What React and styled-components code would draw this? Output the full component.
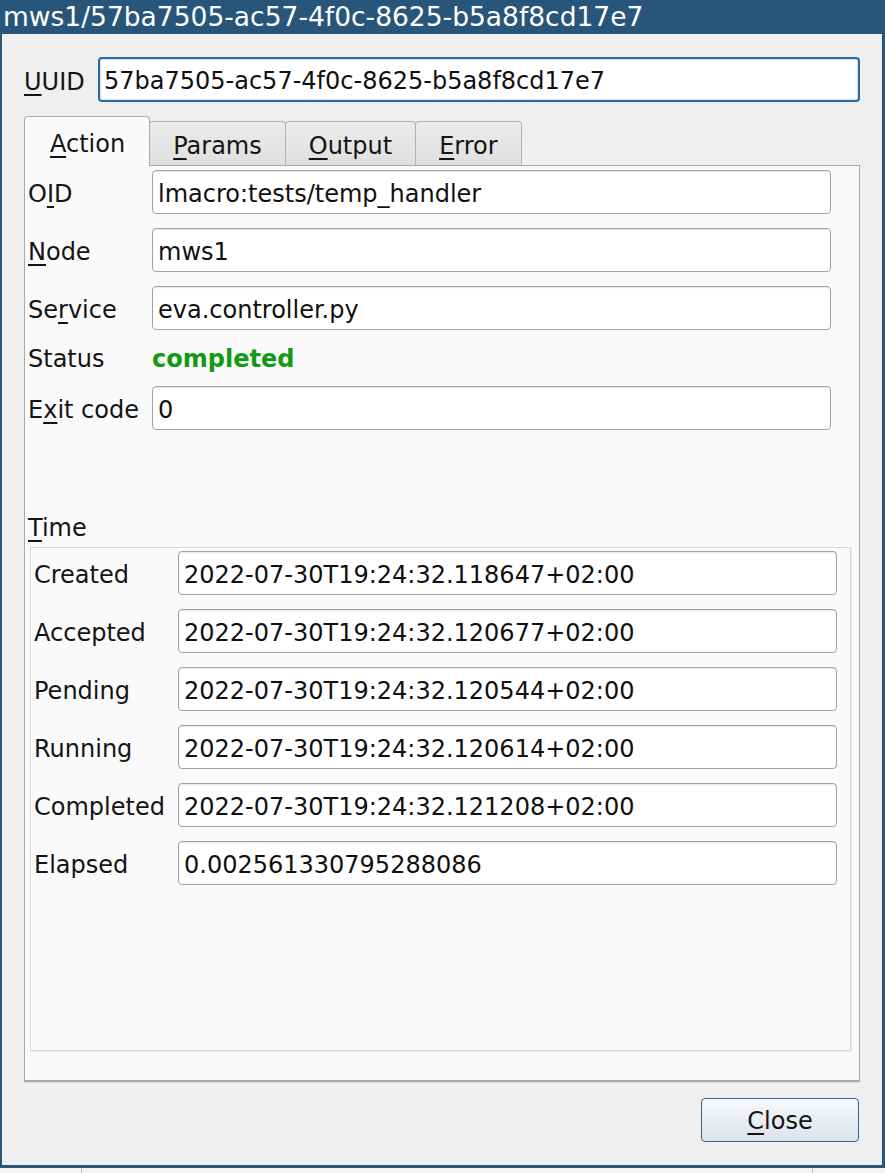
import React from "react";
import styled, { createGlobalStyle, css } from "styled-components";

const GlobalStyle = createGlobalStyle`
  html, body { margin: 0; padding: 0; }
  body {
    background: #f3f4f6;
    font-family: "DejaVu Sans", "Noto Sans", sans-serif;
    color: #101010;
  }
  * { box-sizing: border-box; }
`;

const Window = styled.div`
  width: 885px;
  height: 1168px;
  display: flex;
  flex-direction: column;
  border-left: 2px solid #28567b;
  border-right: 3px solid #28567b;
  border-bottom: 3px solid #28567b;
`;

const TitleBar = styled.div`
  height: 34px;
  flex: none;
  background: #28567b;
  color: #ffffff;
  font-size: 26.5px;
  line-height: 34px;
  padding-left: 1px;
  white-space: nowrap;
  overflow: hidden;
`;

const Body = styled.div`
  flex: 1;
  background: #efefef;
  padding: 23px 22px 23px 22px;
  display: flex;
  flex-direction: column;
`;

const Row = styled.div`
  display: flex;
  align-items: center;
  height: ${(p) => p.$h || 44}px;
  flex: none;
`;

const Label = styled.div`
  width: ${(p) => p.$w}px;
  flex: none;
  font-size: 24px;
  padding-top: ${(p) => (p.$shift ?? 4)}px;
  white-space: nowrap;
  color: #141414;
`;

const Mn = styled.span`
  text-decoration: underline;
  text-decoration-thickness: 2px;
  text-underline-offset: 4px;
`;

const Field = styled.div`
  flex: 1;
  height: 100%;
  background: #ffffff;
  border: 1px solid #a2a2a2;
  border-radius: 4px;
  box-shadow: inset 0 1px 1px rgba(0, 0, 0, 0.09);
  font-size: 24px;
  padding: 4px 0 0 5px;
  display: flex;
  align-items: center;
  white-space: nowrap;
  overflow: hidden;
  color: #101010;
  ${(p) =>
    p.$focused &&
    css`
      border: 2px solid #2c6a9c;
      box-shadow: inset 0 0 0 1px #d3e2ee;
      padding: 3px 0 0 4px;
    `}
`;

const TabBar = styled.div`
  display: flex;
  align-items: flex-start;
  height: 50px;
  margin-top: 14px;
  flex: none;
  position: relative;
  z-index: 1;
`;

const Tab = styled.div`
  height: 44px;
  margin-top: 5px;
  padding: 4px 23px 0;
  font-size: 24px;
  display: flex;
  align-items: center;
  justify-content: center;
  border: 1px solid #b2b2b2;
  border-bottom: none;
  border-radius: 4px 4px 0 0;
  background: linear-gradient(#ececec, #dfdfdf);
  color: #141414;
  margin-left: -1px;
  ${(p) =>
    p.$active &&
    css`
      height: 50px;
      margin-top: 0;
      margin-left: 0;
      background: #fafafa;
      border-color: #aaaaaa;
      padding: 4px 24px 0 25px;
      position: relative;
      z-index: 2;
    `}
`;

const Panel = styled.div`
  height: 916px;
  flex: none;
  margin-top: -1px;
  background: #fafafa;
  border: 1px solid #a9a9a9;
  box-shadow: 0 1px 0 #a9a9a9, 0 2px 0 #dedede;
  display: flex;
  flex-direction: column;
  padding-top: 4px;
`;

const FormSection = styled.div`
  display: flex;
  flex-direction: column;
  gap: 14px;
  padding: 0 28px 0 3px;
`;

const StatusValue = styled.div`
  font-size: 24px;
  font-weight: bold;
  padding-top: 2px;
  color: #129a12;
`;

const GroupTitle = styled.div`
  margin: 83px 0 0 3px;
  height: 28px;
  font-size: 24px;
  padding-top: 2px;
  display: flex;
  align-items: center;
  color: #141414;
`;

const GroupBox = styled.div`
  flex: 1;
  margin: 6px 8px 29px 5px;
  border: 1px solid #d6d6d6;
  box-shadow: inset 1px 1px 0 #ffffff, 1px 1px 0 #e9e9e9;
  padding: 3px 13px 0 3px;
  display: flex;
  flex-direction: column;
  gap: 14px;
`;

const ButtonRow = styled.div`
  display: flex;
  justify-content: flex-end;
  margin-top: 17px;
  padding-right: 1px;
`;

const Button = styled.div`
  width: 158px;
  height: 44px;
  border: 1px solid #2c6a9c;
  border-radius: 4px;
  background: linear-gradient(#f7f9fb, #dbe2e9);
  font-size: 24px;
  padding-top: 2px;
  display: flex;
  align-items: center;
  justify-content: center;
  color: #141414;
`;

const BottomStrip = styled.div`
  height: 5px;
  display: flex;
  align-items: stretch;
`;

const Tick = styled.span`
  width: 1px;
  margin-left: ${(p) => p.$left}px;
  background: #c4c4c4;
`;

const actionRows = [
  { label: <>O<Mn>I</Mn>D</>, value: "lmacro:tests/temp_handler" },
  { label: <><Mn>N</Mn>ode</>, value: "mws1" },
  { label: <>Se<Mn>r</Mn>vice</>, value: "eva.controller.py" },
];

const timeRows = [
  ["Created", "2022-07-30T19:24:32.118647+02:00"],
  ["Accepted", "2022-07-30T19:24:32.120677+02:00"],
  ["Pending", "2022-07-30T19:24:32.120544+02:00"],
  ["Running", "2022-07-30T19:24:32.120614+02:00"],
  ["Completed", "2022-07-30T19:24:32.121208+02:00"],
  ["Elapsed", "0.002561330795288086"],
];

export default function App() {
  return (
    <>
      <GlobalStyle />
      <Window>
        <TitleBar>mws1/57ba7505-ac57-4f0c-8625-b5a8f8cd17e7</TitleBar>
        <Body>
          <Row $h={45}>
            <Label $w={74}>
              <Mn>U</Mn>UID
            </Label>
            <Field $focused>57ba7505-ac57-4f0c-8625-b5a8f8cd17e7</Field>
          </Row>
          <TabBar>
            <Tab $active>
              <span><Mn>A</Mn>ction</span>
            </Tab>
            <Tab>
              <span><Mn>P</Mn>arams</span>
            </Tab>
            <Tab>
              <span><Mn>O</Mn>utput</span>
            </Tab>
            <Tab>
              <span><Mn>E</Mn>rror</span>
            </Tab>
          </TabBar>
          <Panel>
            <FormSection>
              {actionRows.map((r, i) => (
                <Row key={i}>
                  <Label $w={124}>{r.label}</Label>
                  <Field>{r.value}</Field>
                </Row>
              ))}
              <Row $h={28}>
                <Label $w={124} $shift={2}>Status</Label>
                <StatusValue>completed</StatusValue>
              </Row>
              <Row>
                <Label $w={124}>
                  E<Mn>x</Mn>it code
                </Label>
                <Field>0</Field>
              </Row>
            </FormSection>
            <GroupTitle>
              <span><Mn>T</Mn>ime</span>
            </GroupTitle>
            <GroupBox>
              {timeRows.map(([l, v]) => (
                <Row key={l}>
                  <Label $w={144}>{l}</Label>
                  <Field>{v}</Field>
                </Row>
              ))}
            </GroupBox>
          </Panel>
          <ButtonRow>
            <Button>
              <span><Mn>C</Mn>lose</span>
            </Button>
          </ButtonRow>
        </Body>
      </Window>
      <BottomStrip>
        <Tick $left={81} />
        <Tick $left={730} />
      </BottomStrip>
    </>
  );
}
